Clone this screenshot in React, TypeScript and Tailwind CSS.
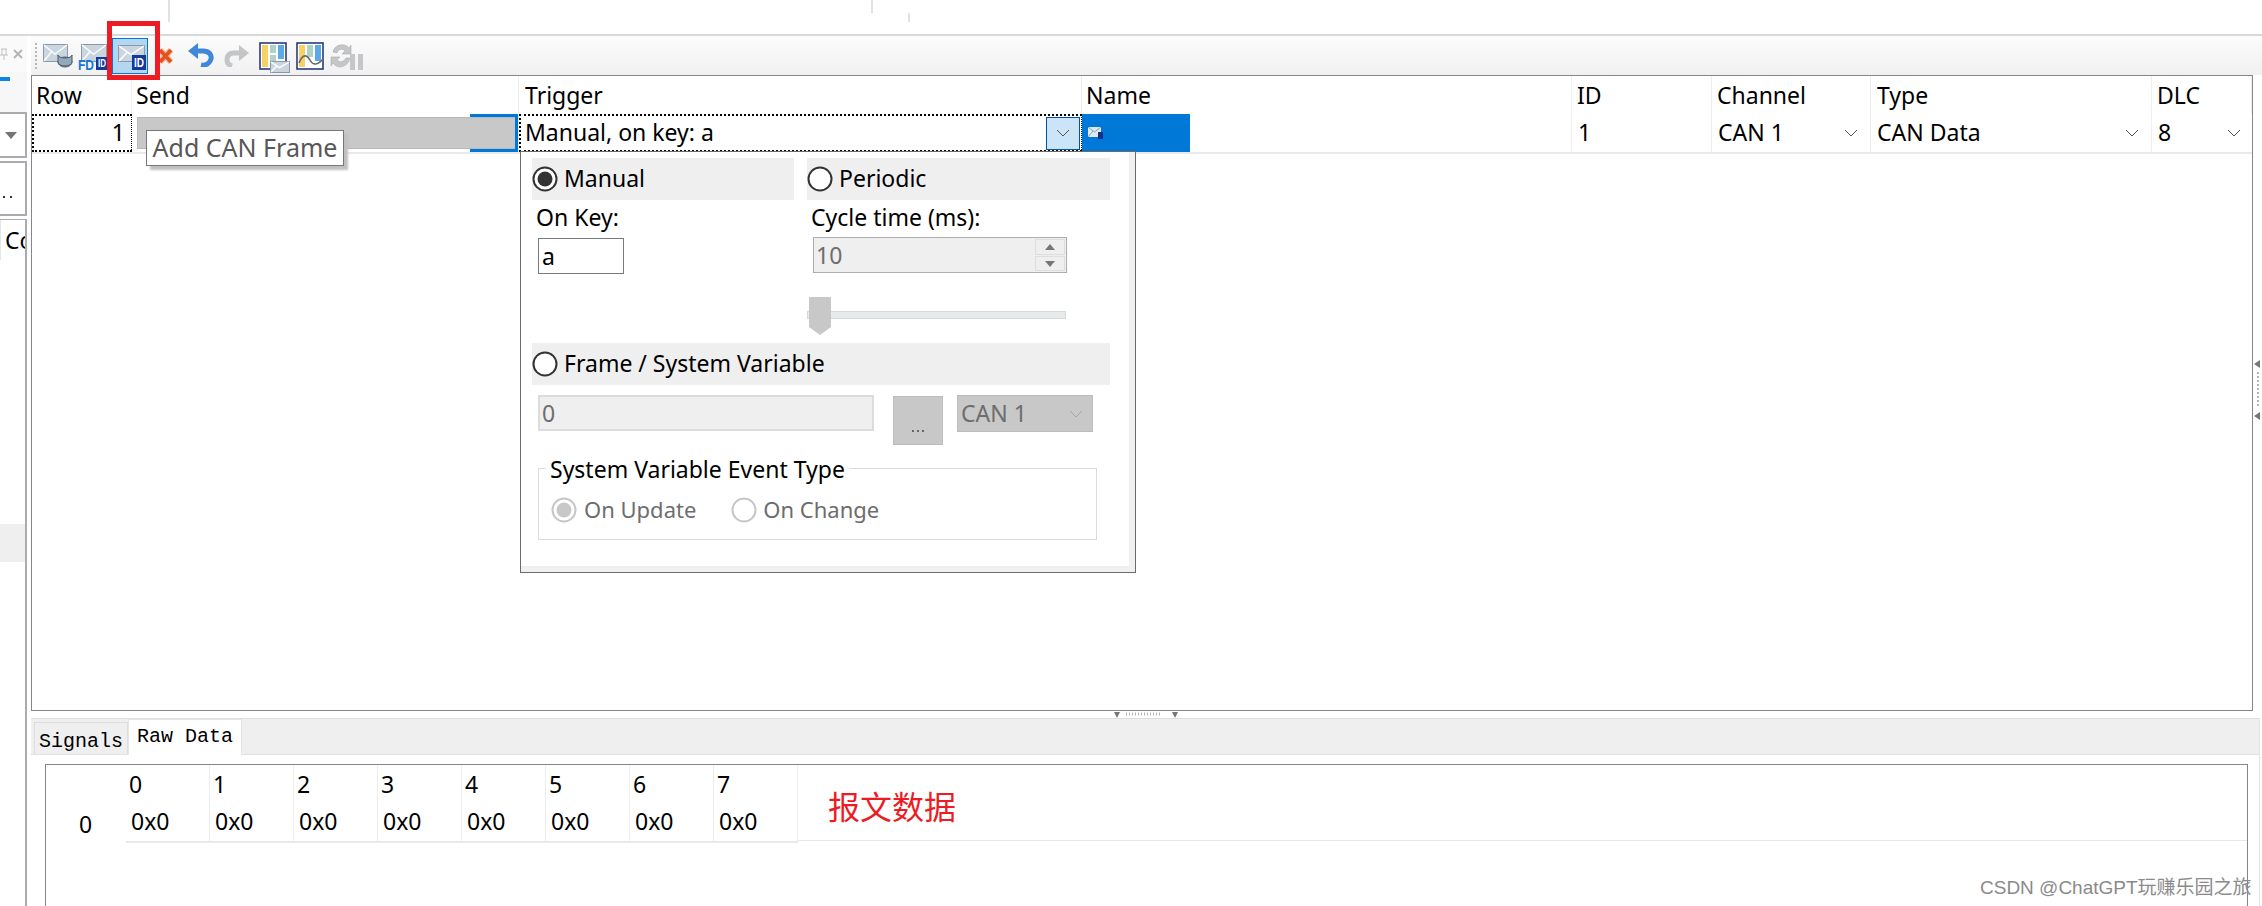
const sans = "font-['Noto_Sans','Liberation_Sans',sans-serif]";

const columns = [
  { label: "Row", width: "w-[100px] pl-[4px]" },
  { label: "Send", width: "w-[387px] pl-[4px]" },
  { label: "Trigger", width: "w-[563px] pl-[6px]" },
  { label: "Name", width: "w-[490px] pl-[4px]" },
  { label: "ID", width: "w-[140px] pl-[5px]" },
  { label: "Channel", width: "w-[159px] pl-[5px]" },
  { label: "Type", width: "w-[281px] pl-[6px]" },
  { label: "DLC", width: "w-[100px] pl-[5px]" },
];

const rawBytes = ["0", "1", "2", "3", "4", "5", "6", "7"];

function Chevron({ color = "#555555" }: { color?: string }) {
  return (
    <svg width="14" height="8" viewBox="0 0 14 8" className="shrink-0">
      <path d="M1 1 L7 7 L13 1" fill="none" stroke={color} strokeWidth="1" />
    </svg>
  );
}

function Radio({ checked = false, disabled = false }: { checked?: boolean; disabled?: boolean }) {
  const stroke = disabled ? "#c6c6c6" : "#333333";
  return (
    <svg width="26" height="26" viewBox="0 0 26 26" className="shrink-0">
      <circle cx="13" cy="13" r="11.5" fill="#ffffff" stroke={stroke} strokeWidth="2" />
      {checked && <circle cx="13" cy="13" r="7.5" fill={disabled ? "#c8c8c8" : "#333333"} />}
    </svg>
  );
}

function MailShape({ x, y, w, h }: { x: number; y: number; w: number; h: number }) {
  return (
    <g>
      <rect x={x + 0.5} y={y + 0.5} width={w} height={h} fill="#c9d6e0" stroke="#8d99a5" />
      <path
        d={`M${x + 1} ${y + 1} L${x + w / 2} ${y + h * 0.6} L${x + w} ${y + 1} M${x + 1} ${y + h} L${x + w * 0.36} ${y + h * 0.45}`}
        fill="none"
        stroke="#ffffff"
        strokeWidth="1.4"
      />
    </g>
  );
}

function IdBadge({ x, y, w, h }: { x: number; y: number; w: number; h: number }) {
  return (
    <g>
      <rect x={x} y={y} width={w} height={h} fill="#13399c" />
      <text
        x={x + w / 2}
        y={y + h - 3}
        textAnchor="middle"
        fontSize={h - 3}
        fontWeight="700"
        fill="#ffffff"
        fontFamily="Liberation Sans"
        textLength={w - 4}
        lengthAdjust="spacingAndGlyphs"
      >
        ID
      </text>
    </g>
  );
}

function Toolbar() {
  return (
    <div className="flex h-[39px] items-center bg-gradient-to-b from-[#fcfcfc] to-[#f1f1f1] pl-[4px]">
      <div className="h-[26px] w-[2px] border-l-2 border-dotted border-[#b5b5b5]" />
      <svg width="30" height="24" viewBox="0 0 30 24" className="ml-[6px] mt-[1px]">
        <MailShape x={0} y={0} w={24} h={17} />
        <ellipse cx="22" cy="18" rx="7" ry="5" fill="#8ea3b6" stroke="#4d5b69" />
        <path d="M15 11 A7 3 0 0 0 29 11 V18 A7 4 0 0 1 15 18 Z" fill="#93a9bc" stroke="#4d5b69" />
      </svg>
      <svg width="31" height="28" viewBox="0 0 31 28" className="ml-[5px] mt-[4px]">
        <MailShape x={3} y={0} w={25} h={17} />
        <text x="0" y="26" fontSize="14" fontWeight="700" fill="#1478d4" fontFamily="Liberation Sans" textLength="16" lengthAdjust="spacingAndGlyphs">FD</text>
        <IdBadge x={18} y={13} w={12} h={13} />
      </svg>
      <div className="ml-[3px] flex h-[36px] w-[36px] items-center justify-center border border-[#0078d7] bg-[#b3d7f3]">
        <svg width="31" height="27" viewBox="0 0 31 27" className="mt-[1px]">
          <MailShape x={3} y={2} w={26} h={16} />
          <IdBadge x={17} y={12} w={14} h={15} />
        </svg>
      </div>
      <svg width="18" height="18" viewBox="0 0 18 18" className="ml-[9px] mt-[1px]">
        <path d="M3 3 L14 15 M14 3 L3 15" fill="none" stroke="#f3b48f" strokeWidth="6" />
        <path d="M3 3 L14 15 M14 3 L3 15" fill="none" stroke="#e4511e" strokeWidth="3.5" />
      </svg>
      <svg width="26" height="25" viewBox="0 0 26 25" className="ml-[13px] mt-[-2px]">
        <path d="M7 9 H15 C21 9 24 13 23 17 C22 21 18 24 13 23" fill="none" stroke="#3f87d9" strokeWidth="5" />
        <polygon points="0,9 10,1 10,17" fill="#3f87d9" />
      </svg>
      <svg width="25" height="22" viewBox="0 0 25 22" className="ml-[10px]">
        <path d="M17 8 H10 C5 8 3 11 3 15 C3 18 5 20 8 21" fill="none" stroke="#c3c5c7" strokeWidth="5" />
        <polygon points="25,8 15,0 15,16" fill="#c3c5c7" />
      </svg>
      <svg width="31" height="31" viewBox="0 0 31 31" className="ml-[10px] mt-[3px]">
        <rect x="1" y="1" width="26" height="26" fill="#ffffff" stroke="#2c3a7c" strokeWidth="1.6" />
        <rect x="3" y="3" width="6" height="22" fill="#f6d264" />
        <rect x="11" y="3" width="6" height="8" fill="#aed2c6" />
        <rect x="19" y="3" width="6" height="14" fill="#5ba9e6" />
        <rect x="11" y="13" width="6" height="6" fill="#aed2c6" />
        <MailShape x={11} y={19} w={19} h={11} />
      </svg>
      <svg width="28" height="28" viewBox="0 0 28 28" className="ml-[6px]">
        <rect x="1" y="1" width="26" height="26" fill="#ffffff" stroke="#2c3a7c" strokeWidth="1.6" />
        <rect x="3" y="3" width="6" height="22" fill="#f6d264" />
        <rect x="11" y="3" width="6" height="12" fill="#aed2c6" />
        <rect x="19" y="3" width="6" height="16" fill="#5ba9e6" />
        <path d="M3 21 C7 11 11 13 14 18 C17 24 22 23 27 17" fill="none" stroke="#666a6e" strokeWidth="1.6" />
      </svg>
      <svg width="33" height="28" viewBox="0 0 33 28" className="ml-[6px]">
        <path d="M3 10 C4 3 14 0 19 6 L21 3 V12 H12 L15 9 C12 6 8 7 7 11 Z" fill="#c4c6c8" stroke="#adafb1" strokeWidth="0.6" />
        <path d="M20 16 C18 25 8 28 3 21 L1 24 V15 H10 L7 18 C10 21 14 20 16 16 Z" fill="#c4c6c8" stroke="#adafb1" strokeWidth="0.6" />
        <rect x="20" y="12" width="5" height="16" fill="#c4c6c8" />
        <rect x="28" y="12" width="5" height="16" fill="#c4c6c8" />
      </svg>
    </div>
  );
}

function LeftPanel() {
  return (
    <div className="flex w-[27px] shrink-0 flex-col text-[23px] text-black">
      <div className="flex h-[36px] items-center justify-end bg-[#fafafa] pr-[4px] text-[#b9b9b9]">
        <svg width="8" height="12" viewBox="0 0 8 12" className="mr-[5px]">
          <path d="M1 1 H7 M2 1 V7 M6 1 V7 M0 7 H8 M4 7 V12" fill="none" stroke="#c0c0c0" strokeWidth="1" />
        </svg>
        <svg width="10" height="10" viewBox="0 0 10 10">
          <path d="M1 1 L9 9 M9 1 L1 9" fill="none" stroke="#b5b5b5" strokeWidth="2" />
        </svg>
      </div>
      <div className="h-[40px] bg-[#f7f7f7] pt-[5px]">
        <div className="h-[4px] w-[10px] bg-[#0a84e6]" />
      </div>
      <div className="flex h-[46px] items-center justify-end border-y-2 border-r-2 border-[#a9abaf] pr-[8px]">
        <svg width="12" height="7" viewBox="0 0 12 7">
          <polygon points="0,0 12,0 6,7" fill="#757575" />
        </svg>
      </div>
      <div className="mt-[3px] flex h-[55px] items-end border-y-2 border-r-2 border-[#a9abaf] pb-[16px] pl-[3px]">
        <div className="flex gap-[5px]">
          <span className="h-[2px] w-[2px] bg-[#333333]" />
          <span className="h-[2px] w-[2px] bg-[#333333]" />
        </div>
      </div>
      <div className="mt-[3px] flex-1 border-t border-r-2 border-[#a9abaf]">
        <div className="flex h-[40px] overflow-hidden">
          <div className="w-[4px] border-r border-[#e5e5e5]" />
          <span className="ml-[4px] leading-[40px]">Co</span>
        </div>
        <div className="mt-[264px] h-[38px] bg-[#efefef]" />
      </div>
    </div>
  );
}

function Cell({ width, children, className = "" }: { width: string; children?: React.ReactNode; className?: string }) {
  return <div className={`relative flex h-[38px] shrink-0 items-center border-r border-[#eeeeee] ${width} ${className}`}>{children}</div>;
}

function GridRow() {
  return (
    <div className="flex h-[40px] border-b-2 border-[#e9e9e9] text-[23px] leading-[32px] text-black">
      <Cell width="w-[100px]" className="justify-end border-2 border-dotted !border-black pb-[2px] pr-[6px]">1</Cell>
      <Cell width="w-[387px]" className="pl-[5px]">
        <div className="h-[32px] w-[379px] border border-[#b9b9b9] bg-[#c8c8c8]" />
        <div className="absolute right-0 top-0 h-[38px] w-[48px] border-y-[3px] border-r-[3px] border-[#0078d7]" />
      </Cell>
      <Cell width="w-[563px]" className="justify-between border-2 border-dotted !border-black pl-[4px] pr-[1px]">
        <span className="mb-[2px]">Manual, on key: a</span>
        <span className="flex h-[33px] w-[34px] items-center justify-center border border-[#005499] bg-[#cce4f7]">
          <Chevron />
        </span>
      </Cell>
      <Cell width="w-[490px]">
        <div className="flex h-[38px] w-[108px] items-center bg-[#0078d7] pl-[6px]">
          <svg width="15" height="12" viewBox="0 0 15 12">
            <rect x="0" y="0" width="13" height="10" fill="#dfe8ef" />
            <path d="M0 0 L6.5 5 L13 0 M0 10 L5 4" fill="none" stroke="#8fa3b5" strokeWidth="1" />
            <rect x="10" y="5" width="5" height="7" fill="#10308f" />
          </svg>
        </div>
      </Cell>
      <Cell width="w-[140px]" className="pb-[2px] pl-[6px]">1</Cell>
      <Cell width="w-[159px]" className="justify-between pl-[6px] pr-[12px]"><span className="mb-[2px]">CAN 1</span><Chevron /></Cell>
      <Cell width="w-[281px]" className="justify-between pl-[6px] pr-[12px]"><span className="mb-[2px]">CAN Data</span><Chevron /></Cell>
      <Cell width="w-[100px]" className="justify-between border-r-0 pl-[6px] pr-[11px]"><span className="mb-[2px]">8</span><Chevron /></Cell>
    </div>
  );
}

function TriggerPopup() {
  return (
    <div className="absolute left-[520px] top-[151px] h-[422px] w-[616px] border border-[#6b6b6b] bg-white text-[23px] text-black">
      <div className="h-[415px] w-[609px] pl-[11px] pt-[6px]">
        <div className="flex gap-[13px]">
          <div className="w-[262px]">
            <div className="flex h-[42px] items-center gap-[6px] bg-[#efefef]">
              <Radio checked />
              <span className="mb-[2px]">Manual</span>
            </div>
            <div className="mt-[2px] h-[36px] pl-[4px] leading-[30px]">On Key:</div>
            <div className="ml-[6px] h-[36px] w-[86px] border border-[#7a7a7a] pl-[3px] leading-[34px]">a</div>
          </div>
          <div className="w-[303px]">
            <div className="flex h-[42px] items-center gap-[6px] bg-[#efefef]">
              <Radio />
              <span className="mb-[2px]">Periodic</span>
            </div>
            <div className="mt-[2px] h-[35px] pl-[4px] leading-[30px]">Cycle time (ms):</div>
            <div className="ml-[6px] flex h-[36px] w-[254px] items-center justify-between border border-[#adadad] bg-[#efefef] pl-[2px] pr-[1px] text-[#6d6d6d]">
              <span>10</span>
              <div className="flex flex-col gap-[1px]">
                <span className="flex h-[16px] w-[30px] items-center justify-center border border-[#dedede]">
                  <svg width="10" height="6" viewBox="0 0 10 6"><polygon points="5,0 10,6 0,6" fill="#777777" /></svg>
                </span>
                <span className="flex h-[15px] w-[30px] items-center justify-center border border-[#dedede]">
                  <svg width="10" height="6" viewBox="0 0 10 6"><polygon points="0,0 10,0 5,6" fill="#777777" /></svg>
                </span>
              </div>
            </div>
            <div className="relative mt-[38px] h-[8px] w-[259px] border border-[#d8d8d8] bg-[#e7eaea]">
              <svg width="22" height="38" viewBox="0 0 22 38" className="absolute left-[1px] top-[-15px]">
                <polygon points="0,0 22,0 22,30 11,38 0,30" fill="#c8c8c8" />
              </svg>
            </div>
          </div>
        </div>
        <div className="mt-[24px] flex h-[42px] w-[578px] items-center gap-[6px] bg-[#efefef]">
          <Radio />
          <span className="mb-[2px]">Frame / System Variable</span>
        </div>
        <div className="ml-[6px] mt-[10px] flex items-start text-[#6d6d6d]">
          <div className="h-[36px] w-[336px] border-2 border-[#dcdcdc] bg-[#efefef] pl-[2px] leading-[32px]">0</div>
          <div className="ml-[19px] mt-[1px] flex h-[49px] w-[50px] items-end justify-center border border-[#bcbcbc] bg-[#c8c8c8] pb-[12px]">
            <div className="flex gap-[3px]">
              <span className="h-[2px] w-[2px] bg-[#666666]" />
              <span className="h-[2px] w-[2px] bg-[#666666]" />
              <span className="h-[2px] w-[2px] bg-[#666666]" />
            </div>
          </div>
          <div className="ml-[14px] flex h-[37px] w-[136px] items-center justify-between border border-[#bcbcbc] bg-[#c8c8c8] pl-[3px] pr-[9px]">
            <span>CAN 1</span>
            <Chevron color="#a6a6a6" />
          </div>
        </div>
        <div className="relative ml-[6px] mt-[23px] h-[72px] w-[559px] border border-[#dcdcdc] pl-[12px] pt-[27px] text-[22px] leading-[26px] text-[#6d6d6d]">
          <span className="absolute left-[7px] top-[-17px] bg-white px-[4px] text-[23px] leading-[34px] text-black">System Variable Event Type</span>
          <div className="flex items-center">
            <Radio checked disabled />
            <span className="mb-[2px] ml-[7px]">On Update</span>
            <span className="ml-[35px]"><Radio disabled /></span>
            <span className="mb-[2px] ml-[6px]">On Change</span>
          </div>
        </div>
      </div>
      <div className="absolute bottom-0 right-0 h-full w-[6px] bg-[#f0f0f0]" />
      <div className="absolute bottom-0 left-0 h-[6px] w-full bg-[#f0f0f0]" />
    </div>
  );
}

function LowerPane() {
  return (
    <div className="mr-[2px] flex min-h-0 flex-1 flex-col border-r border-[#e4e4e4]">
      <div className="flex h-[37px] items-end border-y border-[#e0e0e0] bg-[#efefef] pl-[3px] font-['Liberation_Mono',monospace] text-[20px] text-black">
        <div className="flex h-[32px] w-[94px] items-center justify-center border-x border-t border-[#dedede] pt-[6px]">Signals</div>
        <div className="mb-[-1px] flex h-[36px] w-[114px] items-center justify-center border-x border-t border-[#e4e4e4] bg-white pb-[2px]">Raw Data</div>
      </div>
      <div className="flex-1 bg-white pl-[14px] pr-[11px] pt-[9px]">
        <div className="flex h-full border-x border-t border-[#83868e] text-[23px] text-black">
          <div className="w-[80px] shrink-0 pl-[33px] pt-[42px] leading-[34px]">0</div>
          <div className="flex h-[78px] border-b-2 border-[#e9e9e9]">
            {rawBytes.map((b) => (
              <div key={b} className="w-[84px] border-r border-[#eeeeee]">
                <div className="h-[38px] pl-[3px] leading-[38px]">{b}</div>
                <div className="h-[38px] pl-[5px] leading-[36px]">0x0</div>
              </div>
            ))}
          </div>
          <div className="h-[76px] flex-1 border-b border-[#e9e9e9] pl-[30px] pt-[15px] font-['Noto_Sans_CJK_SC',sans-serif] text-[32px] leading-[50px] text-[#ed1c24]">
            报文数据
          </div>
        </div>
      </div>
    </div>
  );
}

export default function App() {
  return (
    <div className={`relative flex h-[906px] w-[2262px] flex-col overflow-hidden bg-white ${sans}`}>
      <div className="relative h-[36px] shrink-0 border-b-2 border-[#d8d8d8]">
        <div className="absolute left-[168px] top-0 h-[22px] w-[2px] bg-[#e2e2e2]" />
        <div className="absolute left-[871px] top-0 h-[13px] w-[2px] bg-[#e2e2e2]" />
        <div className="absolute left-[908px] top-[13px] h-[9px] w-[2px] bg-[#e2e2e2]" />
      </div>
      <div className="flex min-h-0 flex-1">
        <LeftPanel />
        <div className="ml-[4px] flex min-w-0 flex-1 flex-col">
          <Toolbar />
          <div className="flex h-[636px] shrink-0">
            <div className="w-[2222px] border border-[#83868e]">
              <div className="flex h-[38px] text-[23px] text-black">
                {columns.map((c) => (
                  <div key={c.label} className={`${c.width} shrink-0 border-r border-[#eeeeee] leading-[38px]`}>
                    {c.label}
                  </div>
                ))}
              </div>
              <GridRow />
            </div>
            <div className="relative flex-1">
              <svg width="6" height="60" viewBox="0 0 6 60" className="absolute left-[1px] top-[285px]">
                <polygon points="6,0 6,8 0,4" fill="#777777" />
                <path d="M4 12 V46" stroke="#b4b4b4" strokeWidth="2" strokeDasharray="2 2" />
                <polygon points="6,52 6,60 0,56" fill="#777777" />
              </svg>
            </div>
          </div>
          <div className="flex h-[7px] shrink-0 items-center pl-[1083px]">
            <svg width="66" height="7" viewBox="0 0 66 7">
              <polygon points="0,1 6,1 3,7" fill="#777777" />
              <path d="M12 3 H46" stroke="#b4b4b4" strokeWidth="3" strokeDasharray="1 2" />
              <polygon points="58,1 64,1 61,7" fill="#777777" />
            </svg>
          </div>
          <LowerPane />
        </div>
      </div>

      <TriggerPopup />

      <div className="absolute left-[146px] top-[130px] flex h-[36px] w-[198px] items-center justify-center border border-[#777777] bg-white text-[25px] text-[#575757] shadow-[4px_4px_2px_#c0c0c0]">
        Add CAN Frame
      </div>

      <div className="absolute left-[107px] top-[21px] h-[59px] w-[53px] border-[5px] border-[#ed1c24]" />

      <div className="absolute left-[1980px] top-[876px] font-['Liberation_Sans','Noto_Sans_CJK_SC',sans-serif] text-[19px] leading-[24px] text-[#8a8a8a]">
        CSDN @ChatGPT玩赚乐园之旅
      </div>
    </div>
  );
}
